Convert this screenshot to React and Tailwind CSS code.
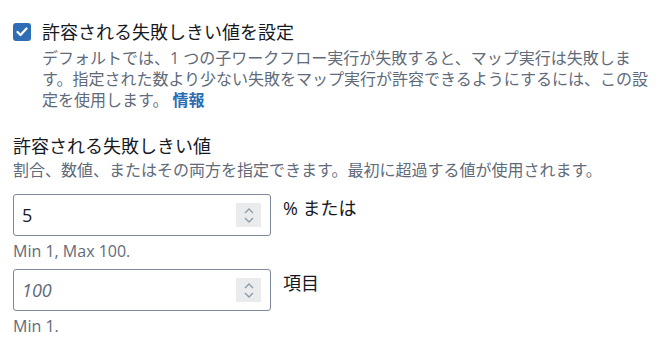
import { useState } from "react";

function Spinner() {
    return (
        <div className="flex h-6 w-[25px] flex-col items-center justify-center gap-[3px] bg-[#e9ebed]">
            <svg width="10" height="6" viewBox="0 0 10 6" fill="none">
                <path d="M1 5 L5 1 L9 5" stroke="#8d99a8" strokeWidth="1.3" />
            </svg>
            <svg width="10" height="6" viewBox="0 0 10 6" fill="none">
                <path d="M1 1 L5 5 L9 1" stroke="#8d99a8" strokeWidth="1.3" />
            </svg>
        </div>
    );
}

function NumberField({ value, placeholder, label, hint }) {
    return (
        <div>
            <div className="flex items-start gap-3">
                <div className="flex h-[42px] w-[258px] items-center justify-between rounded-[3px] border border-[#7d8998] pl-[8px] pr-[9px]">
                    {value ? (
                        <span className="text-[18px] text-[#16191f]">{value}</span>
                    ) : (
                        <span className="text-[18px] italic text-[#5f6b7a]">{placeholder}</span>
                    )}
                    <Spinner />
                </div>
                <span className="mt-[2px] text-[18px] leading-6 text-[#16191f]">{label}</span>
            </div>
            <p className="mt-[5px] text-[16px] leading-[21px] text-[#5f6b7a]">{hint}</p>
        </div>
    );
}

export default function App() {
    const [checked, setChecked] = useState(true);

    return (
        <div
            className="h-[346px] w-[666px] bg-white pl-[13px] pt-[20px]"
            style={{ fontFamily: '"Open Sans", "Noto Sans CJK JP", sans-serif' }}
        >
            {/* Checkbox section */}
            <div className="flex items-start gap-[11px]">
                <button
                    onClick={() => setChecked(!checked)}
                    className="mt-[3px] flex h-[18px] w-[18px] shrink-0 items-center justify-center rounded-[3px] bg-[#2f6db5]"
                >
                    {checked && (
                        <svg width="12" height="10" viewBox="0 0 12 10" fill="none">
                            <path d="M1.5 5 L4.5 8 L10.5 1.5" stroke="white" strokeWidth="2.2" strokeLinecap="round" strokeLinejoin="round" />
                        </svg>
                    )}
                </button>
                <div>
                    <div className="text-[18px] leading-6 text-[#16191f]">許容される失敗しきい値を設定</div>
                    <p className="mt-1 whitespace-nowrap text-[16px] leading-[21px] text-[#5f6b7a]">
                        デフォルトでは、1 つの子ワークフロー実行が失敗すると、マップ実行は失敗しま
                        <br />
                        す。指定された数より少ない失敗をマップ実行が許容できるようにするには、この設
                        <br />
                        定を使用します。 <a className="font-bold text-[#2b6cb3]">情報</a>
                    </p>
                </div>
            </div>

            {/* Threshold section */}
            <div className="mt-[23px]">
                <div className="text-[18px] leading-6 text-[#16191f]">許容される失敗しきい値</div>
                <p className="mt-[2px] text-[16px] leading-[21px] text-[#5f6b7a]">
                    割合、数値、またはその両方を指定できます。最初に超過する値が使用されます。
                </p>
                <div className="mt-[13px] flex flex-col gap-[7px]">
                    <NumberField value="5" label="% または" hint="Min 1, Max 100." />
                    <NumberField placeholder="100" label="項目" hint="Min 1." />
                </div>
            </div>
        </div>
    );
}
